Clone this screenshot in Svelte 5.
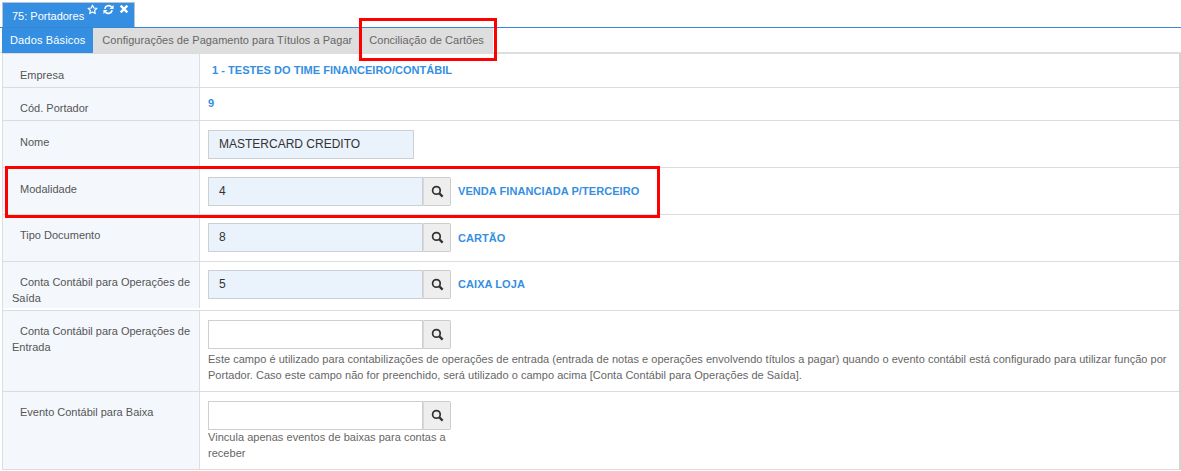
<script>
  var rows = [
    { label: "Empresa", h: 34, top: 13, pad: 9, text: "1 - TESTES DO TIME FINANCEIRO/CONTÁBIL", ind: true },
    { label: "Cód. Portador", h: 33, top: 12, pad: 9, text: "9" },
    { label: "Nome", h: 47, top: 13, pad: 9, value: "MASTERCARD CREDITO", plain: true },
    { label: "Modalidade", h: 47, top: 13, pad: 9, value: "4", desc: "VENDA FINANCIADA P/TERCEIRO" },
    { label: "Tipo Documento", h: 47, top: 12, pad: 8, value: "8", desc: "CARTÃO", low: true },
    { label: "Conta Contábil para Operações de Saída", h: 46, top: 12, pad: 8, value: "5", desc: "CAIXA LOJA", open: true },
    {
      label: "Conta Contábil para Operações de Entrada",
      h: 82,
      top: 12,
      pad: 9,
      value: "",
      gap: true,
      help: "Este campo é utilizado para contabilizações de operações de entrada (entrada de notas e operações envolvendo títulos a pagar) quando o evento contábil está configurado para utilizar função por Portador. Caso este campo não for preenchido, será utilizado o campo acima [Conta Contábil para Operações de Saída]."
    },
    {
      label: "Evento Contábil para Baixa",
      h: 78,
      top: 12,
      pad: 9,
      value: "",
      narrow: true,
      help: "Vincula apenas eventos de baixas para contas a receber"
    }
  ];
</script>

<div class="page">
  <div class="window-tabs">
    <div class="window-tab">
      <span class="window-title">75: Portadores</span>
      <span class="window-icons">
        <svg width="11" height="11" viewBox="0 0 24 24" fill="none" stroke="#fff" stroke-width="2.6" stroke-linejoin="round">
          <path d="M12 2.5l2.9 6.2 6.7.8-5 4.6 1.4 6.7-6-3.4-6 3.4 1.4-6.7-5-4.6 6.7-.8z" />
        </svg>
        <svg width="11" height="11" viewBox="0 0 24 24" fill="none" stroke="#fff" stroke-width="3.8">
          <path d="M4 10.5a8.5 8.5 0 0 1 14.6-4.2" />
          <path d="M20 13.5a8.5 8.5 0 0 1-14.6 4.2" />
          <path d="M23 2v9h-9z" fill="#fff" stroke="none" />
          <path d="M1 22v-9h9z" fill="#fff" stroke="none" />
        </svg>
        <svg width="10" height="10" viewBox="0 0 24 24" fill="none" stroke="#fff" stroke-width="5.6">
          <path d="M4 4l16 16M20 4L4 20" />
        </svg>
      </span>
    </div>
  </div>

  <div class="sub-tabs">
    <div class="sub-tab active">Dados Básicos</div>
    <div class="sub-tab">Configurações de Pagamento para Títulos a Pagar</div>
    <div class="sub-tab">Conciliação de Cartões</div>
  </div>

  <div class="form">
    {#each rows as row}
      <div class="row" class:gap={row.gap} class:open={row.open} style="height: {row.h}px">
        <div class="label" style="padding-top: {row.top}px"><span class="indent"></span>{row.label}</div>
        <div class="field" style="padding-top: {row.pad}px">
          {#if row.text}
            <div class="link static" class:ind={row.ind}>{row.text}</div>
          {:else}
            <div class="control">
              <div class="input-group">
                <div class="input" class:filled={row.value} class:plain={row.plain}>{row.value}</div>
                {#if !row.plain}
                  <div class="search">
                    <svg width="13" height="13" viewBox="0 0 24 24" fill="none" stroke="#333">
                      <circle cx="10" cy="10" r="7" stroke-width="3.2" />
                      <path d="M15.5 15.5l6 6" stroke-width="4.2" />
                    </svg>
                  </div>
                {/if}
              </div>
              {#if row.desc}
                <span class="link" class:low={row.low}>{row.desc}</span>
              {/if}
            </div>
            {#if row.help}
              <p class="help" class:narrow={row.narrow}>{row.help}</p>
            {/if}
          {/if}
        </div>
      </div>
    {/each}
  </div>

  <div class="mark mark-tab"></div>
  <div class="mark mark-row"></div>
</div>

<style>
  :global(body) {
    margin: 0;
    background: #fff;
  }

  .page {
    position: relative;
    width: 1181px;
    height: 471px;
    overflow: hidden;
    font-family: "Liberation Sans", Arial, sans-serif;
    font-size: 11px;
    color: #555;
  }

  .window-tabs {
    height: 28px;
    padding: 2px 0 0 2px;
    box-sizing: border-box;
    border-bottom: 1px solid #3b86d0;
  }

  .window-tab {
    display: flex;
    width: 133px;
    height: 25px;
    box-sizing: border-box;
    background: #348fe2;
    border: 1px solid #b9c4cf;
    border-bottom: 0;
    color: #fff;
    padding-left: 9px;
  }

  .window-title {
    font-size: 11px;
    line-height: 26px;
    white-space: nowrap;
  }

  .window-icons {
    display: flex;
    gap: 5px;
    margin: 1px 0 0 3px;
    align-items: flex-start;
  }

  .sub-tabs {
    display: flex;
    height: 25px;
    box-sizing: border-box;
    padding-left: 2px;
    border-bottom: 1px solid #dedede;
  }

  .sub-tab {
    height: 25px;
    background: #dedede;
    color: #666;
    line-height: 25px;
    padding: 0 7px 0 9px;
    margin-right: 1px;
    white-space: nowrap;
    letter-spacing: 0.04px;
  }

  .sub-tab:last-child {
    padding-right: 9px;
  }

  .sub-tab.active {
    background: #348fe2;
    color: #fff;
    margin-right: 0;
    padding: 0 8px;
    letter-spacing: 0.15px;
  }

  .form {
    margin-left: 2px;
    width: 1179px;
    box-sizing: border-box;
    border-left: 1px solid #dcdfe2;
    border-right: 2px solid #d4d4d4;
    border-top: 1px solid #dcdcdc;
  }

  .row {
    display: flex;
    box-sizing: border-box;
    border-bottom: 1px solid #dcdcdc;
  }

  .row.open {
    border-bottom: 0;
  }

  .row.gap {
    margin-top: 2px;
    border-top: 1px solid #dcdcdc;
  }

  .label {
    flex: 0 0 197px;
    box-sizing: border-box;
    background: #f4f8fd;
    border-right: 1px solid #dcdfe2;
    padding: 0 4px 0 9px;
    line-height: 16px;
  }

  .indent {
    display: inline-block;
    width: 8px;
  }

  .field {
    flex: 1;
    padding: 0 8px;
    min-width: 0;
  }

  .control {
    display: flex;
    align-items: center;
  }

  .input-group {
    display: flex;
    height: 29px;
  }

  .input {
    width: 215px;
    height: 29px;
    box-sizing: border-box;
    border: 1px solid #ccd0d4;
    background: #fff;
    font-size: 12px;
    color: #333;
    line-height: 27px;
    padding-left: 10px;
  }

  .input.filled {
    background: #eaf2fb;
  }

  .input.plain {
    width: 206px;
  }

  .search {
    display: flex;
    align-items: center;
    justify-content: center;
    width: 28px;
    height: 29px;
    box-sizing: border-box;
    background: #eee;
    border: 1px solid #ccc;
    border-left: 1px solid #d8d8d8;
    border-radius: 0 2px 2px 0;
  }

  .link {
    color: #348fe2;
    font-weight: bold;
    margin: 0 0 2px 7px;
    white-space: nowrap;
    letter-spacing: 0.07px;
  }

  .link.low {
    margin-bottom: 0;
  }

  .link.static {
    margin: 0;
  }

  .link.static.ind {
    margin: 1px 0 0 4px;
    letter-spacing: 0.03px;
  }

  .help {
    margin: 2px 0 0;
    font-size: 11px;
    line-height: 16px;
    letter-spacing: 0.027px;
    color: #666;
  }

  .help.narrow {
    width: 250px;
    margin-top: -1px;
  }

  .mark {
    position: absolute;
    box-sizing: border-box;
    border: 3px solid #f00;
    pointer-events: none;
  }

  .mark-tab {
    left: 359px;
    top: 18px;
    width: 138px;
    height: 43px;
  }

  .mark-row {
    left: 5px;
    top: 166px;
    width: 655px;
    height: 52px;
  }
</style>
